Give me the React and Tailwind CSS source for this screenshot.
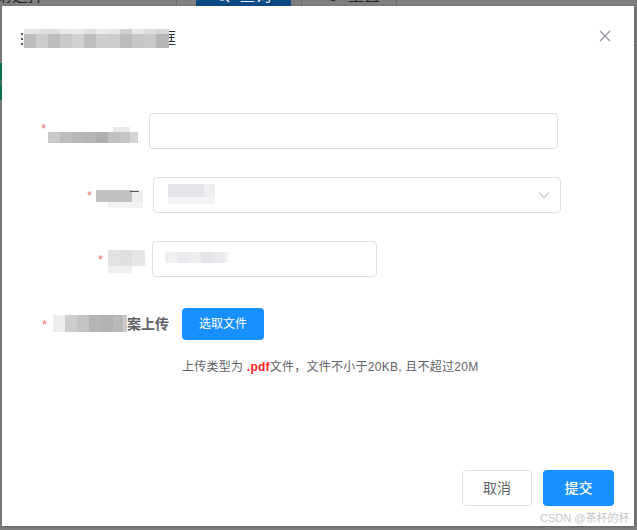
import React from "react";

const Mosaic = ({ rows, className = "" }) => (
  <div className={"flex flex-col shrink-0 " + className}>
    {rows.map((r, i) => (
      <div key={i} className="flex" style={{ height: r.h, marginLeft: r.ml || 0 }}>
        {r.cells.map((c, j) => (
          <div key={j} style={{ width: c[0], background: c[1] }} />
        ))}
      </div>
    ))}
  </div>
);

const Star = ({ className = "" }) => (
  <span className={"text-[#f56c6c] text-[12px] leading-none shrink-0 " + className}>*</span>
);

const titleRows = [
  {
    h: 5,
    cells: [
      [12, "#e4e4e4"], [12, "#e0e0e0"], [12, "#dcdcdc"], [12, "#e8e8e8"], [12, "#eaeaea"], [12, "#e0e0e0"],
      [12, "#eaeaea"], [12, "#e6e6e6"], [12, "#cfcfcf"], [12, "#e6e6e6"], [12, "#dedede"], [13, "#d6d6d6"],
    ],
  },
  {
    h: 14,
    cells: [
      [12, "#bdbdbd"], [12, "#cccccc"], [12, "#bdbdbd"], [12, "#c9c9c9"], [12, "#d1d1d1"], [12, "#bebebe"],
      [12, "#cdcdcd"], [12, "#cccccc"], [12, "#bdbdbd"], [12, "#c6c6c6"], [12, "#c9c9c9"], [13, "#b6b6b6"],
    ],
  },
];

export default function App() {
  return (
    <div className="w-[637px] h-[530px] bg-[#7f7f7f] overflow-hidden flex flex-col font-['Liberation_Sans','Noto_Sans_CJK_SC',sans-serif]">
      {/* background page strip (behind overlay) */}
      <div className="h-[6px] shrink-0 overflow-hidden">
        <div className="flex items-center h-[32px] -mt-[20px] text-[16px] text-[#262626]">
          <span className="-ml-[4px] w-[150px] shrink-0">请选择</span>
          <span className="w-[30px] shrink-0 text-[10px] text-[#3a3a3a]">⌄</span>
          <div className="w-px h-full bg-[#6c6c6c] shrink-0" />
          <div className="ml-[19px] w-[95px] h-full bg-[#0c4a85] flex items-center justify-center gap-[8px] text-[#e8e8e8] shrink-0">
            <svg width="16" height="16" viewBox="0 0 16 16" fill="none" stroke="#e8e8e8" strokeWidth="1.6">
              <circle cx="7" cy="7" r="5" />
              <path d="M11 11l3 3" />
            </svg>
            <span>查询</span>
          </div>
          <div className="ml-[10px] w-px h-full bg-[#6c6c6c] shrink-0" />
          <div className="ml-[24px] flex items-center gap-[8px] w-[70px] shrink-0">
            <svg width="14" height="14" viewBox="0 0 16 16" fill="none" stroke="#262626" strokeWidth="1.5">
              <path d="M3 8a5 5 0 1 0 2-4" />
              <path d="M3 2v4h4" />
            </svg>
            <span>重置</span>
          </div>
          <div className="w-px h-full bg-[#6c6c6c] shrink-0" />
        </div>
      </div>

      <div className="flex h-[520px] shrink-0">
        {/* left strip */}
        <div className="w-[2px] shrink-0 flex flex-col">
          <div className="h-[57px]" />
          <div className="h-[17px] bg-[#0b7450]" />
          <div className="h-[6px] bg-[#3f7466]" />
          <div className="h-[14px] bg-[#0b7450]" />
        </div>

        {/* dialog */}
        <div className="w-[632px] h-[520px] bg-white relative flex flex-col shrink-0 shadow-[0_1px_3px_rgba(0,0,0,0.25)]">
          {/* header */}
          <div className="flex items-start justify-between pt-[23px] pl-[19px] pr-[23px]">
            <div className="flex items-start">
              <div className="w-[2px] h-[19px] flex flex-col justify-center gap-[3px] mr-[1px]">
                <div className="h-[2px] bg-[#555]" />
                <div className="h-[2px] bg-[#555]" />
                <div className="h-[2px] bg-[#555]" />
              </div>
              <Mosaic rows={titleRows} />
              <div className="w-[7px] h-[19px] overflow-hidden">
                <span className="block -ml-[9px] text-[16px] leading-[19px] text-[#303133]">框</span>
              </div>
            </div>
            <svg className="mt-[1px]" width="12" height="12" viewBox="0 0 12 12" fill="none" stroke="#909399" strokeWidth="1.2">
              <path d="M1 1l10 10M11 1L1 11" />
            </svg>
          </div>

          {/* form */}
          <div className="mt-[65px] flex flex-col gap-[28px]">
            {/* row 1 */}
            <div className="flex items-center h-[36px]">
              <div className="w-[147px] shrink-0 flex justify-end items-center pr-[11px] gap-[2px]">
                <Star className="-mt-[4px]" />
                <Mosaic
                  className="mt-[8px]"
                  rows={[
                    { h: 5, ml: 65, cells: [[17, "#e9e9e9"]] },
                    {
                      h: 11,
                      cells: [[12, "#c9c9c9"], [12, "#bdbdbd"], [12, "#b8b8b8"], [12, "#b5b5b5"], [12, "#afafaf"], [12, "#c1c1c1"], [10, "#c5c5c5"], [8, "#d4d4d4"]],
                    },
                  ]}
                />
              </div>
              <div className="w-[409px] h-[36px] border border-[#dcdfe6] rounded-[4px]" />
            </div>

            {/* row 2 */}
            <div className="flex items-center h-[36px]">
              <div className="w-[151px] shrink-0 flex justify-end items-center pr-[10px] gap-[4px]">
                <Star className="mt-[2px]" />
                <div className="relative mt-[8px]">
                  <Mosaic
                    rows={[
                      { h: 12, cells: [[36, "#c2c2c2"], [11, "#ededed"]] },
                      { h: 6, ml: 12, cells: [[35, "#f3f3f3"]] },
                    ]}
                  />
                  <div className="absolute left-[34px] top-[1px] w-[9px] h-[1px] bg-[#555]" />
                </div>
              </div>
              <div className="w-[408px] h-[36px] border border-[#dcdfe6] rounded-[4px] flex items-center justify-between pl-[14px] pr-[10px]">
                <Mosaic
                  className="-mt-[2px]"
                  rows={[
                    { h: 13, cells: [[36, "#e4e4e8"], [11, "#efeff1"]] },
                    { h: 7, cells: [[47, "#f4f4f6"]] },
                  ]}
                />
                <svg width="12" height="8" viewBox="0 0 12 8" fill="none" stroke="#c0c4cc" strokeWidth="1.2">
                  <path d="M1 1.5l5 5 5-5" />
                </svg>
              </div>
            </div>

            {/* row 3 */}
            <div className="flex items-center h-[36px]">
              <div className="w-[150px] shrink-0 flex justify-end items-center pr-[7px] gap-[5px]">
                <Star className="mt-[2px]" />
                <Mosaic
                  className="mt-[4px]"
                  rows={[
                    { h: 16, cells: [[12, "#e2e2e2"], [12, "#dfdfdf"], [13, "#e6e6e6"]] },
                    { h: 7, cells: [[24, "#efefef"]] },
                  ]}
                />
              </div>
              <div className="w-[225px] h-[36px] border border-[#dcdfe6] rounded-[4px] flex items-center pl-[12px]">
                <Mosaic
                  className="-mt-[4px]"
                  rows={[
                    {
                      h: 11,
                      cells: [[12, "#f0f0f2"], [12, "#ebebef"], [12, "#eeeef1"], [12, "#e6e6ea"], [12, "#eaeaee"], [3, "#f2f2f4"]],
                    },
                  ]}
                />
              </div>
            </div>

            {/* row 4 */}
            <div className="flex items-center h-[32px] mt-[3px]">
              <div className="w-[180px] shrink-0 flex justify-end items-center pr-[13px]">
                <Star className="mr-[6px] mt-[1px]" />
                <Mosaic
                  className="mt-[-2px]"
                  rows={[
                    {
                      h: 17,
                      cells: [[12, "#ededed"], [12, "#cdcdcd"], [12, "#c4c4c4"], [12, "#b5b5b5"], [12, "#b1b1b1"], [10, "#b9b9b9"], [4, "#cbcbcb"]],
                    },
                  ]}
                />
                <span className="text-[14px] font-bold text-[#606266] leading-none">案上传</span>
              </div>
              <div className="w-[82px] h-[32px] rounded-[4px] bg-[#1890ff] flex items-center justify-center text-white text-[12px]">
                选取文件
              </div>
            </div>
          </div>

          {/* hint */}
          <div className="ml-[180px] mt-[19px] text-[12px] leading-[17px] tracking-[0.25px] text-[#606266]">
            上传类型为 <span className="text-[#ff1f1f] font-bold">.pdf</span>文件，文件不小于20KB, 且不超过20M
          </div>

          {/* footer */}
          <div className="mt-auto flex justify-end gap-[11px] pr-[20px] pb-[20px]">
            <div className="w-[70px] h-[36px] border border-[#dcdfe6] rounded-[4px] flex items-center justify-center text-[14px] text-[#606266]">
              取消
            </div>
            <div className="w-[71px] h-[36px] rounded-[4px] bg-[#1890ff] flex items-center justify-center text-[14px] text-white font-medium">
              提交
            </div>
          </div>

          {/* watermark */}
          <div className="absolute left-[538px] top-[506px] text-[11px] leading-[13px] text-[#c6c6c6] whitespace-nowrap">
            CSDN @茶杯的杯
          </div>
        </div>

        {/* right strip */}
        <div className="flex-1 flex flex-col bg-[#777]">
          <div className="h-[37px]" />
          <div className="h-px bg-[#8c8c8c]" />
        </div>
      </div>
    </div>
  );
}
